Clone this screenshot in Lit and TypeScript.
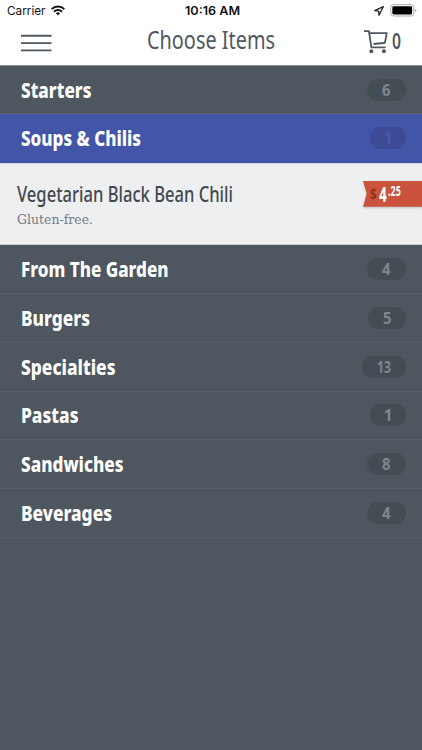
import { LitElement, html, css, nothing } from "lit";
import { customElement, property } from "lit/decorators.js";

/** Condensed lettering: real text squeezed to a given advance width. */
@customElement("condensed-text")
class CondensedText extends LitElement {
  @property() text = "";
  @property({ type: Number }) width = 50;
  @property({ type: Number }) height = 24;
  @property({ type: Number }) baseline = 18;

  static styles = css`
    :host { display: block; flex: none; }
    svg { display: block; overflow: visible; }
    text { fill: currentColor; }
  `;

  render() {
    return html`<svg width=${this.width} height=${this.height}>
      <text x="0" y=${this.baseline} textLength=${this.width} lengthAdjust="spacingAndGlyphs">${this.text}</text>
    </svg>`;
  }
}

@customElement("status-bar")
class StatusBar extends LitElement {
  static styles = css`
    :host { display: grid; grid-template-columns: 1fr auto 1fr; height: 22px; padding: 0 5px 0 7px; color: #111; font-family: Inter, "Liberation Sans", sans-serif; font-size: 12px; }
    .side { display: flex; }
    .right { justify-content: flex-end; }
    .time { font-weight: 600; }
    .wifi { margin: 5px 0 0 5px; }
    .arrow { margin: 6px 6px 0 0; }
    .battery { margin-top: 4px; }
    svg { display: block; flex: none; }
  `;

  render() {
    return html`
      <div class="side">
        <condensed-text text="Carrier" width="38.5" height="22" baseline="15"></condensed-text>
        <svg class="wifi" width="14" height="11" viewBox="0 0 14 11" fill="none" stroke="#111" stroke-width="2">
          <path d="M.7 4.1a9 9 0 0 1 12.6 0M3 6.7a5.7 5.7 0 0 1 8 0" />
          <path d="M4.9 8.3a3 3 0 0 1 4.2 0L7 10.5z" fill="#111" stroke="none" />
        </svg>
      </div>
      <condensed-text class="time" text="10:16 AM" width="55" height="22" baseline="15"></condensed-text>
      <div class="side right">
        <svg class="arrow" width="10" height="10" viewBox="0 0 10 10" fill="none" stroke="#222" stroke-width="1.3" stroke-linejoin="round">
          <path d="M9.3.7.7 4.6l4 .5.3 4.2z" />
        </svg>
        <svg class="battery" width="27" height="13" viewBox="0 0 27 13">
          <rect x=".7" y=".7" width="23" height="11.3" rx="2.8" fill="none" stroke="#aaa" stroke-width="1" />
          <rect x="2.3" y="2.3" width="19.8" height="8.1" rx="1.4" fill="#000" />
          <path d="M25.1 4.5q1.3.5 1.3 1.9t-1.3 1.9z" fill="#aaa" />
        </svg>
      </div>
    `;
  }
}

@customElement("top-bar")
class TopBar extends LitElement {
  static styles = css`
    :host { display: grid; grid-template-columns: 1fr auto 1fr; height: 43px; padding: 0 21px; border-bottom: 1px solid #8d9395; color: #4f5760; }
    svg { display: block; flex: none; }
    .menu { margin-top: 12px; }
    .title { font-size: 25.5px; font-weight: 400; }
    .cart { display: flex; justify-content: flex-end; gap: 4px; }
    .icon { margin-top: 7px; }
    .count { font-size: 21.5px; font-weight: 600; }
  `;

  render() {
    return html`
      <svg class="menu" width="31" height="19" viewBox="0 0 31 19" stroke="#4f5760" stroke-width="1.9">
        <path d="M0 1.8h30.5M0 9.1h30.5M0 16.4h30.5" />
      </svg>
      <condensed-text class="title" text="Choose Items" width="128" height="42" baseline="27.3"></condensed-text>
      <div class="cart">
        <svg class="icon" width="24" height="25" viewBox="0 0 24 25" fill="none" stroke="#4f5760" stroke-width="1.8" stroke-linejoin="round">
          <path d="M0 2.2h4.9l2.5 16.1h14.2M5.2 4.2h17.6l-1.8 9.1q-.1.6-.8.7L9.5 15" />
          <circle cx="7.3" cy="22.2" r="2" fill="#4f5760" stroke="none" />
          <circle cx="19.9" cy="22.2" r="2" fill="#4f5760" stroke="none" />
        </svg>
        <condensed-text class="count" text="0" width="9" height="42" baseline="27"></condensed-text>
      </div>
    `;
  }
}

@customElement("category-row")
class CategoryRow extends LitElement {
  @property() name = "";
  @property({ type: Number }) nameWidth = 70;
  @property() count = "";
  @property({ type: Number }) badgeWidth = 39;
  @property({ type: Boolean, reflect: true }) active = false;

  static styles = css`
    :host { display: flex; justify-content: space-between; align-items: center; box-sizing: border-box; height: 48.8px; padding: 0 16px 0 20.6px; border-bottom: 1px solid #58616a; background: #4e565f; color: #fff; }
    :host([active]) { background: #4355a7; border-bottom-color: #4355a7; }
    .name { font-size: 21px; font-weight: 800; }
    .badge { display: flex; justify-content: center; box-sizing: border-box; height: 22px; border-radius: 11px; background: #444c54; color: #7d8791; font-size: 16px; font-weight: 700; }
    :host([active]) .badge { background: #3d4b97; color: #4c59a2; }
  `;

  render() {
    const digits = this.count.length > 1 ? 14 : 8.5;
    return html`
      <condensed-text class="name" .text=${this.name} .width=${this.nameWidth} .height=${24} .baseline=${19.6}></condensed-text>
      <div class="badge" style="width:${this.badgeWidth}px">
        <condensed-text .text=${this.count} .width=${digits} .height=${22} .baseline=${17}></condensed-text>
      </div>
    `;
  }
}

@customElement("menu-item")
class MenuItem extends LitElement {
  static styles = css`
    :host { display: flex; justify-content: space-between; box-sizing: border-box; height: 82px; padding: 0 0 0 16.6px; border-top: 1px solid #d3d7ee; border-bottom: 1px solid #c9cfd2; background: #eeeff1; }
    .name { margin-top: 17.5px; color: #42494f; font-size: 21px; font-weight: 500; }
    .note { color: #737b88; font-family: "DejaVu Serif", serif; font-size: 13.3px; }
    .tag { display: flex; box-sizing: border-box; width: 59px; height: 26px; margin-top: 16.5px; padding-left: 7px; color: #fff; background: #cb523c; clip-path: polygon(0 0, 100% 0, 100% 100%, 0 100%, 3.7px 50%); }
    .shade { filter: drop-shadow(0 1px 1px #0003); }
    .currency { color: #8c3024; font-size: 14px; font-weight: 700; }
    .whole { margin-left: 2.5px; font-size: 21px; font-weight: 800; }
    .cents { margin-left: 1.2px; font-size: 14px; font-weight: 800; }
  `;

  render() {
    return html`
      <div>
        <condensed-text class="name" text="Vegetarian Black Bean Chili" width="216" height="26" baseline="20.3"></condensed-text>
        <condensed-text class="note" text="Gluten-free." width="76" height="20" baseline="15.6"></condensed-text>
      </div>
      <div class="shade">
        <div class="tag">
          <condensed-text class="currency" text="$" width="6.8" height="25" baseline="18"></condensed-text>
          <condensed-text class="whole" text="4" width="7.8" height="25" baseline="20.8"></condensed-text>
          <condensed-text class="cents" text=".25" width="12.8" height="25" baseline="15.3"></condensed-text>
        </div>
      </div>
    `;
  }
}

const CATEGORIES = [
  { name: "Starters", width: 70.5, count: "6", badge: 39 },
  { name: "Soups & Chilis", width: 120, count: "1", badge: 36, active: true },
  { name: "From The Garden", width: 147.5, count: "4", badge: 39 },
  { name: "Burgers", width: 69, count: "5", badge: 38 },
  { name: "Specialties", width: 94.5, count: "13", badge: 44 },
  { name: "Pastas", width: 57.5, count: "1", badge: 36 },
  { name: "Sandwiches", width: 102.5, count: "8", badge: 39 },
  { name: "Beverages", width: 91, count: "4", badge: 39 },
];

@customElement("app-root")
class AppRoot extends LitElement {
  static styles = css`
    :host { display: flex; flex-direction: column; height: 100vh; overflow: hidden; background: #4e565f; font-family: "Noto Sans", "Open Sans", sans-serif; }
    header { flex: none; background: #fff; }
    main { flex: 1; margin-top: -0.4px; }
  `;

  render() {
    return html`
      <header>
        <status-bar></status-bar>
        <top-bar></top-bar>
      </header>
      <main>
        ${CATEGORIES.map(
          (c) => html`
            <category-row .name=${c.name} .nameWidth=${c.width} .count=${c.count} .badgeWidth=${c.badge} ?active=${c.active}></category-row>
            ${c.active ? html`<menu-item></menu-item>` : nothing}
          `
        )}
      </main>
    `;
  }
}
